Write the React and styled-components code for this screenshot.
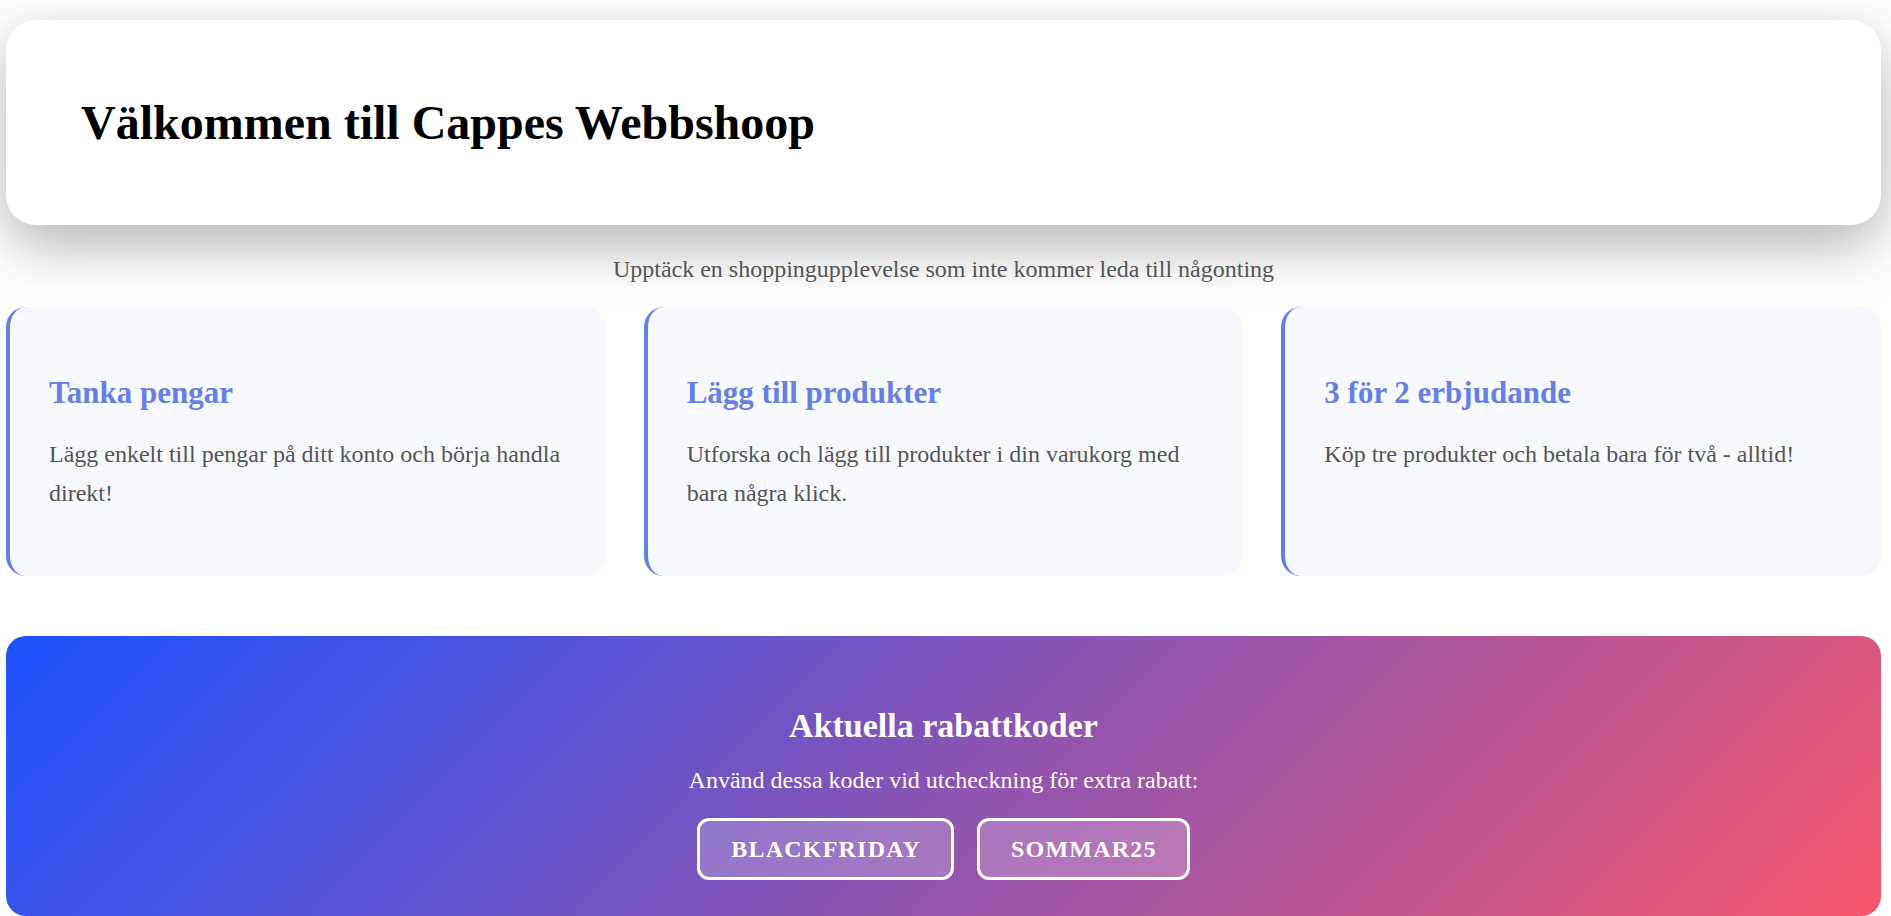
import React from "react";
import styled, { createGlobalStyle } from "styled-components";

const GlobalStyle = createGlobalStyle`
  html, body {
    margin: 0;
    padding: 0;
    background: #ffffff;
  }
  body {
    font-family: "Liberation Serif", "Times New Roman", serif;
    font-size: 24px;
    color: #000;
  }
  * { box-sizing: border-box; }
`;

const Page = styled.div`
  padding: 20px 10px 0 6px;
  display: flex;
  flex-direction: column;
`;

const Header = styled.header`
  height: 205px;
  background: #ffffff;
  border-radius: 30px;
  box-shadow: 0 20px 60px rgba(0, 0, 0, 0.3);
  padding: 0 75px;
  display: flex;
  align-items: center;
`;

const Title = styled.h1`
  margin: 0;
  font-size: 48px;
  font-weight: 700;
  color: #000;
`;

const Tagline = styled.p`
  margin: 31px 0 0;
  text-align: center;
  color: #555;
  font-size: 24px;
  line-height: 27.6px;
`;

const Features = styled.section`
  margin-top: 23px;
  display: grid;
  grid-template-columns: repeat(3, 1fr);
  gap: 38px;
`;

const Card = styled.article`
  background: #f8f9ff;
  border-left: 4px solid #667eea;
  border-radius: 20px;
  padding: 40px 36px 40px 39px;
`;

const CardTitle = styled.h3`
  margin: 28px 0 25px;
  font-size: 31px;
  font-weight: 700;
  color: #667eea;
  line-height: 35.6px;
`;

const CardText = styled.p`
  margin: 0 0 24px;
  color: #555;
  font-size: 24px;
  line-height: 1.6;
`;

const Promo = styled.section`
  margin-top: 60px;
  border-radius: 20px;
  background: linear-gradient(135deg, #1a52ff 0%, #f5576c 100%);
  padding: 70px 20px 36px;
  display: flex;
  flex-direction: column;
  align-items: center;
  color: #fff;
`;

const PromoTitle = styled.h2`
  margin: 0;
  font-size: 34px;
  font-weight: 700;
  line-height: 39px;
`;

const PromoText = styled.p`
  margin: 22px 0 0;
  font-size: 24px;
  line-height: 27.6px;
`;

const Codes = styled.div`
  margin-top: 23px;
  display: flex;
  gap: 23px;
`;

const Code = styled.span`
  display: inline-block;
  border: 3px solid #fff;
  border-radius: 12px;
  background: rgba(255, 255, 255, 0.2);
  padding: 14px 30px 14px 31px;
  font-size: 24px;
  line-height: 28px;
  font-weight: 700;
  letter-spacing: 1.2px;
  color: #fff;
`;

const features = [
  {
    title: "Tanka pengar",
    text: "Lägg enkelt till pengar på ditt konto och börja handla direkt!",
  },
  {
    title: "Lägg till produkter",
    text: "Utforska och lägg till produkter i din varukorg med bara några klick.",
  },
  {
    title: "3 för 2 erbjudande",
    text: "Köp tre produkter och betala bara för två - alltid!",
  },
];

export default function App() {
  return (
    <>
      <GlobalStyle />
      <Page>
        <Header>
          <Title>Välkommen till Cappes Webbshoop</Title>
        </Header>
        <Tagline>
          Upptäck en shoppingupplevelse som inte kommer leda till någonting
        </Tagline>
        <Features>
          {features.map((f) => (
            <Card key={f.title}>
              <CardTitle>{f.title}</CardTitle>
              <CardText>{f.text}</CardText>
            </Card>
          ))}
        </Features>
        <Promo>
          <PromoTitle>Aktuella rabattkoder</PromoTitle>
          <PromoText>Använd dessa koder vid utcheckning för extra rabatt:</PromoText>
          <Codes>
            <Code>BLACKFRIDAY</Code>
            <Code>SOMMAR25</Code>
          </Codes>
        </Promo>
      </Page>
    </>
  );
}
